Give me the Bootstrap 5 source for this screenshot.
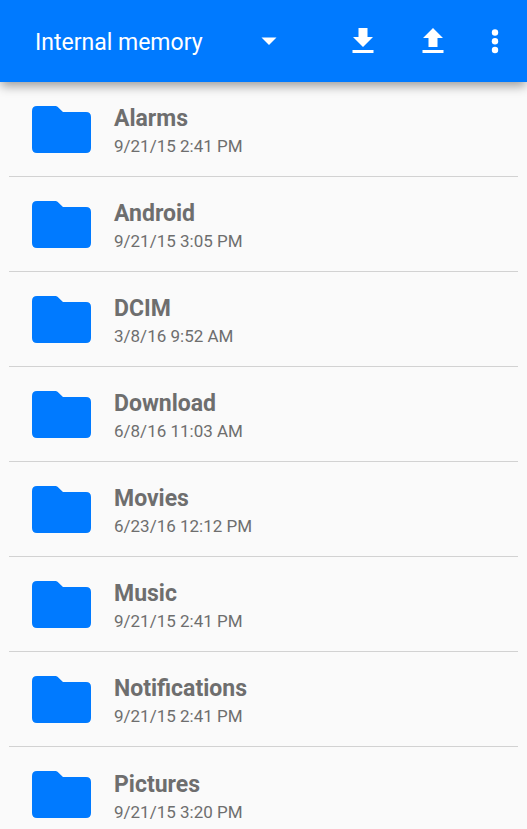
<!DOCTYPE html>
<html lang="en">
<head>
<meta charset="utf-8">
<meta name="viewport" content="width=device-width, initial-scale=1">
<title>Internal memory</title>
<link href="https://cdn.jsdelivr.net/npm/bootstrap@5.3.0/dist/css/bootstrap.min.css" rel="stylesheet">
<style>
  body { background: #fafafa; font-family: Roboto, sans-serif; color: #6e6e6e; }
  .app-bar { background: #007aff; height: 82px; padding: 0 6px 0 35px; box-shadow: 0 5px 10px -1px rgba(0, 0, 0, .38); }
  .storage { width: 242px; }
  .storage select { appearance: none; background: transparent; font-size: 23px; line-height: 32px; padding: 4px 32px 0 0; }
  .storage option { color: #333; }
  .storage svg { pointer-events: none; }
  .tool { width: 70px; height: 56px; }
  .tool-menu { width: 53px; }
  .files { padding: 0 9px; }
  .file { height: 95px; border-bottom: 1px solid #d2d2d2; padding: 0 23px; gap: 23px; }
  .file:last-child { border-bottom: 0; }
  .file svg { fill: #007aff; }
  .file-text { padding-top: 4px; }
  .file-name { font-size: 23px; line-height: 30px; font-weight: 700; }
  .file-date { font-size: 17px; line-height: 24px; }
</style>
<script src="https://cdn.jsdelivr.net/npm/bootstrap@5.3.0/dist/js/bootstrap.bundle.min.js" defer></script>
</head>
<body>
<header class="app-bar sticky-top d-flex align-items-center">
  <div class="storage position-relative d-flex align-items-center">
    <select class="w-100 border-0 text-white" aria-label="Storage">
      <option>Internal memory</option>
    </select>
    <svg class="position-absolute end-0" width="16" height="8" viewBox="0 0 16 8" fill="#fff" aria-hidden="true"><path d="M.5.5h15L8 8z"/></svg>
  </div>
  <button class="tool btn p-0 border-0 ms-auto d-flex align-items-center justify-content-center" type="button" aria-label="Download">
    <svg width="24" height="28" viewBox="0 0 24 28" fill="#fff"><path d="M7.500 1h9v9H22L12 20 2 10h5.500zM1.500 23h21v3h-21z"/></svg>
  </button>
  <button class="tool btn p-0 border-0 d-flex align-items-center justify-content-center" type="button" aria-label="Upload">
    <svg width="24" height="28" viewBox="0 0 24 28" fill="#fff"><path d="M12 1l10 10h-5.500v9h-9v-9H2zM1.500 23h21v3h-21z"/></svg>
  </button>
  <button class="tool tool-menu btn p-0 border-0 d-flex align-items-center justify-content-center" type="button" aria-label="More options">
    <svg width="8" height="28" viewBox="0 0 8 28" fill="#fff"><circle cx="4" cy="5.500" r="3.200"/><circle cx="4" cy="14.200" r="3.200"/><circle cx="4" cy="23" r="3.200"/></svg>
  </button>
</header>

<svg class="d-none" aria-hidden="true">
  <symbol id="folder" viewBox="0 0 59 47"><path d="M5 0h18.500q1.200 0 2 .8l5.500 5.200h23q5 0 5 5v31q0 5-5 5H5q-5 0-5-5V5q0-5 5-5z"/></symbol>
</svg>

<main>
  <ul class="files list-unstyled mb-0">
    <li class="file d-flex align-items-center"><svg width="59" height="47" aria-hidden="true"><use href="#folder"/></svg><div class="file-text"><div class="file-name">Alarms</div><div class="file-date">9/21/15 2:41 PM</div></div></li>
    <li class="file d-flex align-items-center"><svg width="59" height="47" aria-hidden="true"><use href="#folder"/></svg><div class="file-text"><div class="file-name">Android</div><div class="file-date">9/21/15 3:05 PM</div></div></li>
    <li class="file d-flex align-items-center"><svg width="59" height="47" aria-hidden="true"><use href="#folder"/></svg><div class="file-text"><div class="file-name">DCIM</div><div class="file-date">3/8/16 9:52 AM</div></div></li>
    <li class="file d-flex align-items-center"><svg width="59" height="47" aria-hidden="true"><use href="#folder"/></svg><div class="file-text"><div class="file-name">Download</div><div class="file-date">6/8/16 11:03 AM</div></div></li>
    <li class="file d-flex align-items-center"><svg width="59" height="47" aria-hidden="true"><use href="#folder"/></svg><div class="file-text"><div class="file-name">Movies</div><div class="file-date">6/23/16 12:12 PM</div></div></li>
    <li class="file d-flex align-items-center"><svg width="59" height="47" aria-hidden="true"><use href="#folder"/></svg><div class="file-text"><div class="file-name">Music</div><div class="file-date">9/21/15 2:41 PM</div></div></li>
    <li class="file d-flex align-items-center"><svg width="59" height="47" aria-hidden="true"><use href="#folder"/></svg><div class="file-text"><div class="file-name">Notifications</div><div class="file-date">9/21/15 2:41 PM</div></div></li>
    <li class="file d-flex align-items-center"><svg width="59" height="47" aria-hidden="true"><use href="#folder"/></svg><div class="file-text"><div class="file-name">Pictures</div><div class="file-date">9/21/15 3:20 PM</div></div></li>
  </ul>
</main>
</body>
</html>
